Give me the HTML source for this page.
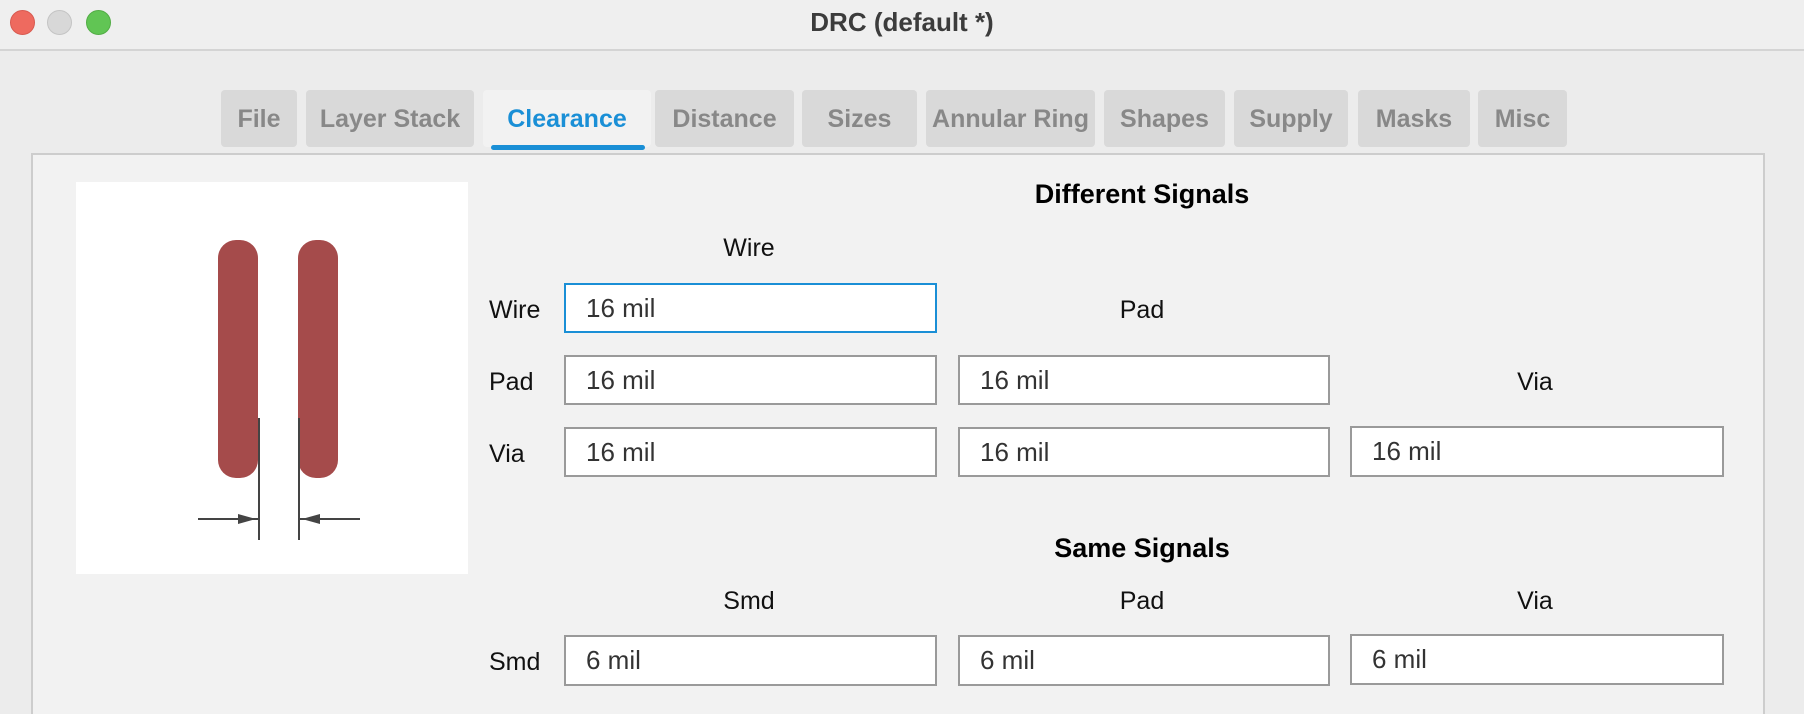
<!DOCTYPE html>
<html style="overflow:hidden;width:1804px;height:714px"><head><meta charset="utf-8"><style>
*{margin:0;padding:0;box-sizing:border-box}
body{width:1804px;height:714px;background:#ececec;font-family:"Liberation Sans",sans-serif;position:relative;overflow:hidden}
.abs{position:absolute}
.titlebar{left:0;top:0;width:1804px;height:51px;background:#efefef;border-bottom:2px solid #d4d4d4}
.dot{width:25px;height:25px;border-radius:50%;top:10px}
.title{left:0;width:1804px;top:7px;text-align:center;font-weight:bold;font-size:26px;color:#3c3c3c}
.tab{top:90px;height:57px;background:#d9d9d9;border-radius:4px;color:#888;font-weight:bold;font-size:25px;text-align:center;line-height:58px;white-space:nowrap}
.tab.sel{background:#f2f2f2;color:#1a8fd6}
.panel{left:31px;top:153px;width:1734px;height:580px;background:#f2f2f2;border:2px solid #cdcdcd}
.lbl{font-size:25px;color:#111;transform:translateX(-50%);white-space:nowrap}
.rl{font-size:25px;color:#111}
.h{font-weight:bold;font-size:27px;color:#000;transform:translateX(-50%);white-space:nowrap}
.in{background:#fff;border:2px solid #9a9a9a;font-size:26px;color:#333;padding-left:20px;display:flex;align-items:center}
.in.f{border-color:#1a8fd6}
</style></head><body>
<div class="abs titlebar"></div>
<div class="abs dot" style="left:10px;background:#ee6a5f;border:1px solid #d85a50"></div>
<div class="abs dot" style="left:47px;background:#d8d8d8;border:1px solid #c4c4c4"></div>
<div class="abs dot" style="left:86px;background:#61c554;border:1px solid #52ad45"></div>
<div class="abs title">DRC (default *)</div>

<div class="abs panel"></div>

<div class="abs tab" style="left:221px;width:76px">File</div>
<div class="abs tab" style="left:306px;width:168px">Layer Stack</div>
<div class="abs tab sel" style="left:483px;width:168px">Clearance</div>
<div class="abs" style="left:491px;top:145px;width:154px;height:5px;border-radius:3px;background:#1a8fd6"></div>
<div class="abs tab" style="left:655px;width:139px">Distance</div>
<div class="abs tab" style="left:802px;width:115px">Sizes</div>
<div class="abs tab" style="left:926px;width:169px">Annular Ring</div>
<div class="abs tab" style="left:1104px;width:121px">Shapes</div>
<div class="abs tab" style="left:1234px;width:114px">Supply</div>
<div class="abs tab" style="left:1358px;width:112px">Masks</div>
<div class="abs tab" style="left:1478px;width:89px">Misc</div>

<svg class="abs" style="left:76px;top:182px" width="392" height="392" viewBox="76 182 392 392">
<rect x="76" y="182" width="392" height="392" fill="#fff"/>
<rect x="218" y="240" width="40" height="238" rx="18" fill="#a54b4b"/>
<rect x="298" y="240" width="40" height="238" rx="18" fill="#a54b4b"/>
<g stroke="#444" stroke-width="2" fill="none">
<line x1="259" y1="418" x2="259" y2="540"/>
<line x1="299" y1="418" x2="299" y2="540"/>
<line x1="198" y1="519" x2="258" y2="519"/>
<line x1="300" y1="519" x2="360" y2="519"/>
</g>
<path d="M238 514 L256 519 L238 524 Z" fill="#444"/>
<path d="M320 514 L302 519 L320 524 Z" fill="#444"/>
</svg>

<div class="abs h" style="left:1142px;top:179px">Different Signals</div>
<div class="abs lbl" style="left:749px;top:234px">Wire</div>
<div class="abs lbl" style="left:1142px;top:296px">Pad</div>
<div class="abs lbl" style="left:1535px;top:368px">Via</div>
<div class="abs rl" style="left:489px;top:296px">Wire</div>
<div class="abs rl" style="left:489px;top:368px">Pad</div>
<div class="abs rl" style="left:489px;top:440px">Via</div>

<div class="abs in f" style="left:564px;top:283px;width:373px;height:50px">16 mil</div>
<div class="abs in" style="left:564px;top:355px;width:373px;height:50px">16 mil</div>
<div class="abs in" style="left:958px;top:355px;width:372px;height:50px">16 mil</div>
<div class="abs in" style="left:564px;top:427px;width:373px;height:50px">16 mil</div>
<div class="abs in" style="left:958px;top:427px;width:372px;height:50px">16 mil</div>
<div class="abs in" style="left:1350px;top:426px;width:374px;height:51px">16 mil</div>

<div class="abs h" style="left:1142px;top:533px">Same Signals</div>
<div class="abs lbl" style="left:749px;top:587px">Smd</div>
<div class="abs lbl" style="left:1142px;top:587px">Pad</div>
<div class="abs lbl" style="left:1535px;top:587px">Via</div>
<div class="abs rl" style="left:489px;top:648px">Smd</div>
<div class="abs in" style="left:564px;top:635px;width:373px;height:51px">6 mil</div>
<div class="abs in" style="left:958px;top:635px;width:372px;height:51px">6 mil</div>
<div class="abs in" style="left:1350px;top:634px;width:374px;height:51px">6 mil</div>
</body></html>
